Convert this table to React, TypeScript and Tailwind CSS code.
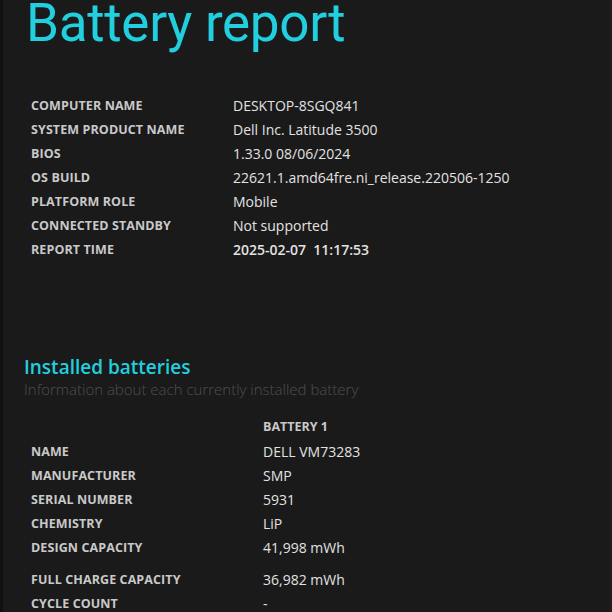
import React from 'react';

const font = { fontFamily: '"Open Sans", "Noto Sans", sans-serif' };

const systemRows: [string, string, boolean?][] = [
  ['COMPUTER NAME', 'DESKTOP-8SGQ841'],
  ['SYSTEM PRODUCT NAME', 'Dell Inc. Latitude 3500'],
  ['BIOS', '1.33.0 08/06/2024'],
  ['OS BUILD', '22621.1.amd64fre.ni_release.220506-1250'],
  ['PLATFORM ROLE', 'Mobile'],
  ['CONNECTED STANDBY', 'Not supported'],
  ['REPORT TIME', '2025-02-07  11:17:53', true],
];

const batteryRows: [string, string][] = [
  ['NAME', 'DELL VM73283'],
  ['MANUFACTURER', 'SMP'],
  ['SERIAL NUMBER', '5931'],
  ['CHEMISTRY', 'LiP'],
  ['DESIGN CAPACITY', '41,998 mWh'],
];

const Label: React.FC<{ children: React.ReactNode }> = ({ children }) => (
  <div className="text-[12.5px] font-bold text-[#c9c9c9] tracking-[0.1px] pt-[2px]">{children}</div>
);

const App: React.FC = () => {
  return (
    <div className="w-[612px] h-[612px] overflow-hidden bg-[#1a1a1a] border-l-[3px] border-[#111111] border-r-[3px] border-r-[#1d1d1d]" style={font}>
      <div className="pl-[23px]">
        <h1
          className="text-[53px] font-normal leading-[46px] text-[#22cfdf] tracking-[-0.3px]"
          style={{ fontFamily: 'Roboto, "Open Sans", sans-serif' }}
        >
          Battery report
        </h1>

        {/* system info */}
        <div className="mt-[47px] pl-[5px] grid grid-cols-[202px_1fr] auto-rows-[24px] items-center">
          {systemRows.map(([k, v, bold]) => (
            <React.Fragment key={k}>
              <Label>{k}</Label>
              <div className={`text-[14px] text-[#e2e2e2] whitespace-pre ${bold ? 'font-semibold' : ''}`}>{v}</div>
            </React.Fragment>
          ))}
        </div>

        {/* installed batteries */}
        <div className="mt-[94px] -ml-[2px]">
          <h2 className="text-[19px] font-semibold leading-[24px] text-[#22cfdf]">Installed batteries</h2>
          <p className="text-[15px] font-light leading-[20px] text-[#4f4f4f]">Information about each currently installed battery</p>
        </div>

        <div className="mt-[16px] pl-[5px] grid grid-cols-[232px_1fr] auto-rows-[24px] items-center">
          <div />
          <div className="text-[12.5px] font-bold text-[#c9c9c9]">BATTERY 1</div>
          {batteryRows.map(([k, v]) => (
            <React.Fragment key={k}>
              <Label>{k}</Label>
              <div className="text-[14px] text-[#e2e2e2]">{v}</div>
            </React.Fragment>
          ))}
        </div>
        <div className="mt-[8px] pl-[5px] grid grid-cols-[232px_1fr] auto-rows-[24px] items-center">
          <Label>FULL CHARGE CAPACITY</Label>
          <div className="text-[14px] text-[#e2e2e2]">36,982 mWh</div>
          <Label>CYCLE COUNT</Label>
          <div className="text-[14px] text-[#e2e2e2]">-</div>
        </div>
      </div>
    </div>
  );
};

export default App;
